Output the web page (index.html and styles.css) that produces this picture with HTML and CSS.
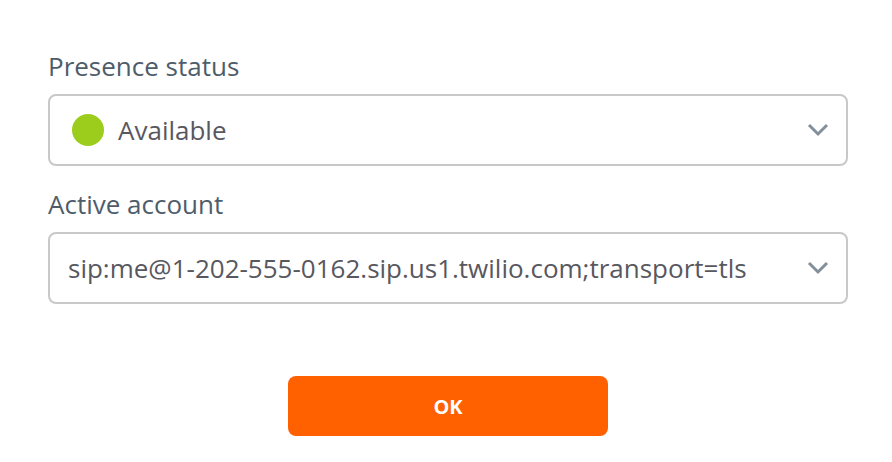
FILE: index.html
```html
<!DOCTYPE html>
<html lang="en">
<head>
<meta charset="utf-8">
<meta name="viewport" content="width=device-width, initial-scale=1">
<title>Presence</title>
<link rel="stylesheet" href="styles.css">
</head>
<body>
<form class="panel">
  <label class="label" for="status">Presence status</label>
  <div class="field">
    <span class="dot"></span>
    <select class="select select-dot" id="status"><option>Available</option></select>
    <svg class="chevron" viewBox="0 0 22 14" aria-hidden="true"><path d="M2 2l9 9 9-9"/></svg>
  </div>
  <label class="label" for="account">Active account</label>
  <div class="field">
    <select class="select" id="account"><option>sip:me@1-202-555-0162.sip.us1.twilio.com;transport=tls</option></select>
    <svg class="chevron" viewBox="0 0 22 14" aria-hidden="true"><path d="M2 2l9 9 9-9"/></svg>
  </div>
  <button class="ok" type="button">OK</button>
</form>
</body>
</html>
```
FILE: styles.css
```css
* {
  box-sizing: border-box;
}

body {
  margin: 0;
  background: #fff;
  color: #4e5d6a;
  font-family: "Open Sans", "Noto Sans", sans-serif;
  font-size: 26px;
}

.panel {
  display: flex;
  flex-direction: column;
  padding: 48px 44px 26px 48px;
}

.label {
  line-height: 36px;
  margin-bottom: 10px;
}

.field {
  position: relative;
  display: grid;
  margin-bottom: 20px;
}

.select {
  appearance: none;
  width: 100%;
  height: 72px;
  padding: 0 56px 0 18px;
  border: 2px solid #c8c8c8;
  border-radius: 8px;
  background: #fff;
  color: #58585f;
  font: inherit;
}

.select-dot {
  padding-left: 68px;
}

.dot {
  position: absolute;
  top: 20px;
  left: 24px;
  width: 32px;
  height: 32px;
  border-radius: 50%;
  background: #9dcd1c;
}

.chevron {
  position: absolute;
  top: 29px;
  right: 19px;
  width: 22px;
  height: 14px;
  fill: none;
  stroke: #82909c;
  stroke-width: 3;
  pointer-events: none;
}

.ok {
  align-self: center;
  width: 40%;
  height: 60px;
  margin-top: 52px;
  border: 0;
  border-radius: 8px;
  background: #ff6000;
  color: #fff;
  font: bold 20px "Open Sans", "Noto Sans", sans-serif;
}
```
